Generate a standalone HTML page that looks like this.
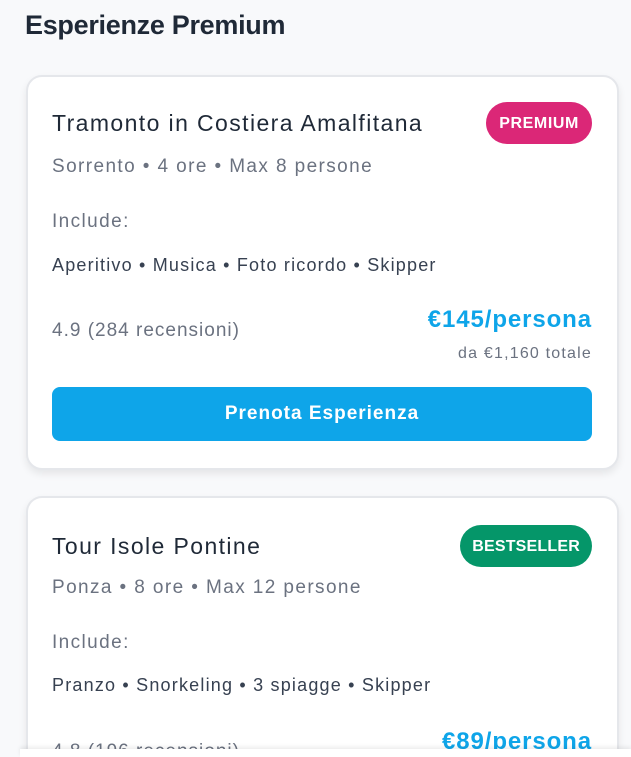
<!DOCTYPE html>
<html style="width:631px;height:757px;overflow:hidden"><head><meta charset="utf-8"><style>
*{box-sizing:border-box;margin:0;padding:0}
body{width:631px;height:757px;overflow:hidden;background:#f8f9fb;font-family:"Liberation Sans",sans-serif;position:relative}
h1{position:absolute;left:25px;top:10px;font-size:27px;font-weight:bold;color:#1f2937;letter-spacing:-0.3px}
.card{position:absolute;left:26px;width:593px;background:#fff;border:2px solid #e5e7eb;border-radius:16px;box-shadow:0 4px 8px rgba(0,0,0,.08);overflow:hidden}
.t{position:absolute;left:24px;font-size:23px;color:#1f2937;letter-spacing:1.4px;white-space:nowrap}
.badge{position:absolute;right:25px;height:42px;border-radius:21px;color:#fff;font-weight:bold;font-size:16px;line-height:44px;padding:0 13px;letter-spacing:0.6px}
.g{position:absolute;left:24px;font-size:19px;color:#6b7280;letter-spacing:1.4px;white-space:nowrap}
.it{position:absolute;left:24px;font-size:18px;color:#374151;letter-spacing:1.2px;white-space:nowrap}
.pr{position:absolute;right:25px;font-size:24px;font-weight:bold;color:#0ea5e9;letter-spacing:0.9px}
.btn{position:absolute;left:24px;right:25px;top:310px;height:54px;background:#0ea5e9;border-radius:8px;color:#fff;font-weight:bold;font-size:19px;text-align:center;line-height:54px;letter-spacing:1px}
</style></head><body>
<h1>Esperienze Premium</h1>
<div class="card" style="top:75px;height:395px">
<div class="t" style="top:33px">Tramonto in Costiera Amalfitana</div>
<div class="badge" style="top:25px;background:#db2777">PREMIUM</div>
<div class="g" style="top:79px">Sorrento • 4 ore • Max 8 persone</div>
<div class="g" style="top:134px">Include:</div>
<div class="it" style="top:178px">Aperitivo • Musica • Foto ricordo • Skipper</div>
<div class="g" style="top:243px;letter-spacing:1px">4.9 (284 recensioni)</div>
<div class="pr" style="top:229px">€145/persona</div>
<div style="position:absolute;right:25px;top:268px;font-size:16px;color:#6b7280;letter-spacing:1.2px">da €1,160 totale</div>
<div class="btn">Prenota Esperienza</div>
</div>
<div class="card" style="top:496px;height:258px;border-bottom:none;border-radius:16px 16px 0 0">
<div class="t" style="top:35px">Tour Isole Pontine</div>
<div class="badge" style="top:27px;background:#059669;letter-spacing:0.2px;padding:0 12px">BESTSELLER</div>
<div class="g" style="top:79px">Ponza • 8 ore • Max 12 persone</div>
<div class="g" style="top:134px">Include:</div>
<div class="it" style="top:177px">Pranzo • Snorkeling • 3 spiagge • Skipper</div>
<div class="g" style="top:243px;letter-spacing:1px">4.8 (196 recensioni)</div>
<div class="pr" style="top:230px">€89/persona</div>
</div>
<div style="position:absolute;left:20px;top:749px;width:611px;height:8px;background:#fff;box-shadow:0 -2px 4px rgba(0,0,0,.08)"></div>
</body></html>
